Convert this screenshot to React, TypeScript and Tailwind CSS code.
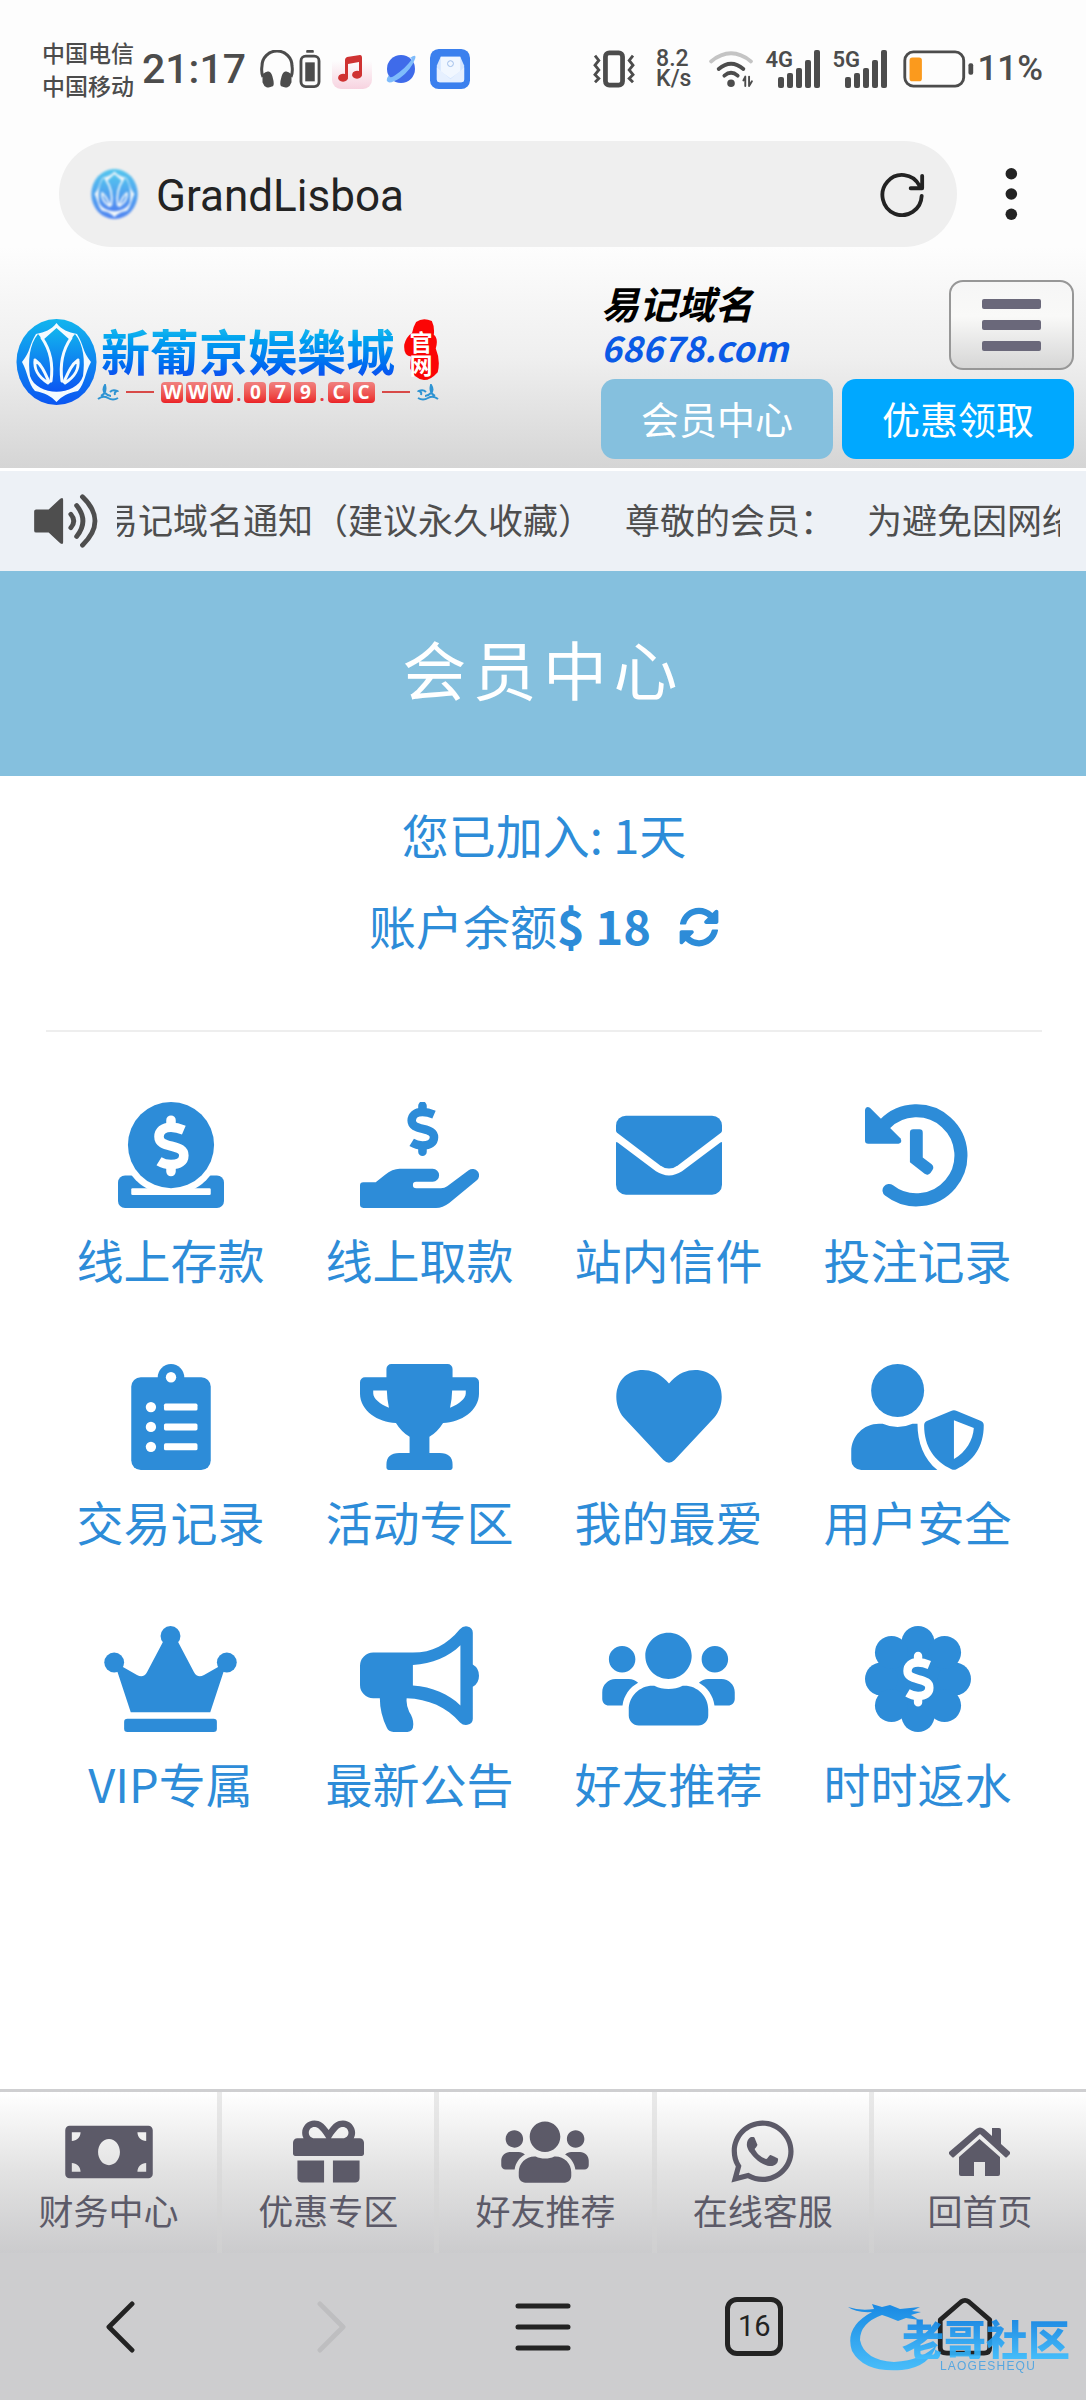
import type { ReactNode } from 'react';
import { FaGift, FaMoneyBill, FaSyncAlt, FaUsers, FaWhatsapp } from 'react-icons/fa';

type Item = {
    label: string;
    icon: ReactNode;
};

const dollar =
    'M318 136Q285 122 256 122C218 122 198 142 198 168C198 196 222 204 258 213C298 223 318 232 318 258C318 286 296 302 256 302Q224 302 198 286';

function Dollar({ color, transform }: { color: string; transform?: string }) {
    return (
        <g transform={transform} stroke={color} fill="none" strokeWidth="46">
            <path d={dollar} strokeLinejoin="round" />
            <path d="M256 88v22M256 312v24" strokeLinecap="round" />
        </g>
    );
}

function Coin() {
    return (
        <svg viewBox="0 0 512 512" className="h-[106px] w-[106px]" fill="currentColor">
            <rect y="355" width="512" height="157" rx="34" />
            <circle cx="256" cy="208" r="240" fill="#fff" />
            <path d="M64 440h384v40H64z" />
            <rect x="64" y="417" width="384" height="32" rx="6" fill="#fff" />
            <circle cx="256" cy="208" r="208" />
            <Dollar color="#fff" />
        </svg>
    );
}

function HandDollar() {
    return (
        <svg viewBox="0 0 576 512" className="h-[106px] w-[119px]" fill="currentColor">
            <Dollar color="currentColor" transform="translate(72 -62) scale(.9)" />
            <path d="M16 388H76L120 353Q157 323 192 323H352a31 31 0 0 1 0 62H272a16 16 0 0 0 0 32H392Q409 417 422 407L526 330a31 31 0 0 1 38 50L432 488Q400 512 368 512H16a16 16 0 0 1-16-16V404a16 16 0 0 1 16-16z" />
        </svg>
    );
}

function Mail() {
    return (
        <svg viewBox="0 0 512 512" className="h-[106px] w-[106px]" fill="currentColor">
            <path d="M48 66h416a48 48 0 0 1 48 48V138Q512 144 507 148L300 305Q256 338 212 305L5 148Q0 144 0 138V114a48 48 0 0 1 48-48z" />
            <path d="M0 196Q0 190 8 196L193 335Q256 375 319 335L504 196Q512 190 512 196V400a48 48 0 0 1-48 48H48a48 48 0 0 1-48-48z" />
        </svg>
    );
}

function History() {
    return (
        <svg viewBox="0 0 512 512" className="h-[106px] w-[106px]" fill="currentColor">
            <path d="M94 108A215 215 0 1 1 116 427" fill="none" stroke="currentColor" strokeWidth="63" strokeLinecap="round" />
            <path d="M0 38Q4 18 24 28L172 176Q182 196 162 202H16Q0 202 0 186z" />
            <path d="M233 132h30a16 16 0 0 1 16 16v120l43 33a20 20 0 0 1 4 28l-10 14a20 20 0 0 1-28 4l-71-56V148a16 16 0 0 1 16-16z" />
        </svg>
    );
}

function Clipboard() {
    return (
        <svg viewBox="0 0 384 512" className="h-[106px] w-[80px]" fill="currentColor">
            <circle cx="192" cy="64" r="64" />
            <rect y="64" width="384" height="448" rx="46" />
            <g fill="#fff">
                <circle cx="192" cy="64" r="25" />
                <circle cx="95" cy="208" r="25" />
                <circle cx="95" cy="304" r="25" />
                <circle cx="95" cy="400" r="25" />
                <rect x="158" y="191" width="162" height="34" rx="8" />
                <rect x="158" y="287" width="162" height="34" rx="8" />
                <rect x="158" y="383" width="162" height="34" rx="8" />
            </g>
        </svg>
    );
}

function Trophy() {
    return (
        <svg viewBox="0 0 576 512" className="h-[106px] w-[119px]" fill="currentColor">
            <path
                fillRule="evenodd"
                d="M152 0h272a24 24 0 0 1 24 24v40h104a24 24 0 0 1 24 24v56C576 224 490 284 402 285Q376 328 336 352V430h50q62 0 62 56v16q0 10-10 10H138q-10 0-10-10v-16q0-56 62-56h50V352Q200 328 174 285C86 284 0 224 0 144V88a24 24 0 0 1 24-24h104V24a24 24 0 0 1 24-24zM64 128h66q1 45 10 83C96 195 64 165 64 141zM512 128h-66q-1 45-10 83C480 195 512 165 512 141z"
            />
        </svg>
    );
}

function Heart() {
    return (
        <svg viewBox="0 0 512 512" className="h-[106px] w-[106px]" fill="currentColor">
            <path d="M256 94L244 81C180 12 88 18 40 62C-8 106-14 196 38 260L229 464Q256 490 283 464L474 260C526 196 520 106 472 62C424 18 332 12 268 81z" />
        </svg>
    );
}

function UserShield() {
    return (
        <svg viewBox="0 0 640 512" className="h-[106px] w-[133px]" fill="currentColor">
            <circle cx="224" cy="128" r="128" />
            <path d="M134 288h18q72 32 144 0h24c0 90 30 170 96 224H48a48 48 0 0 1-48-48V422C0 348 60 288 134 288z" />
            <path
                fillRule="evenodd"
                d="M482 227Q496 220 510 227L624 274Q640 280 640 296C640 400 590 470 508 508Q496 514 484 508C402 470 352 400 352 296Q352 280 368 274zM496 272V459C555 425 588 368 592 309z"
            />
        </svg>
    );
}

function Crown() {
    return (
        <svg viewBox="0 0 640 512" className="h-[106px] w-[133px]" fill="currentColor">
            <circle cx="48" cy="176" r="48" />
            <circle cx="320" cy="48" r="48" />
            <circle cx="592" cy="176" r="48" />
            <path d="M86 196L158 237Q190 254 207 222L284 76H356L433 222Q450 254 482 237L554 196L578 216L512 416H128L62 216z" />
            <rect x="96" y="448" width="448" height="64" rx="16" />
        </svg>
    );
}

function Bullhorn() {
    return (
        <svg viewBox="0 0 576 512" className="h-[106px] w-[119px]" fill="currentColor">
            <path
                fillRule="evenodd"
                d="M64 128H256C350 128 420 90 482 16Q500-2 520 2Q546 8 546 32V186q30 18 30 54t-30 54V448Q546 472 520 478Q500 482 484 466C420 392 330 352 226 349q-4 30 12 66q20 30 20 60q0 36-28 37h-68q-24 0-32-20q-34-70-34-143H64a64 64 0 0 1-64-64V192a64 64 0 0 1 64-64zM256 188V288C350 294 430 330 486 384V93C430 150 350 182 256 188z"
            />
        </svg>
    );
}

function BadgeDollar() {
    return (
        <svg viewBox="0 0 512 512" className="h-[106px] w-[106px]" fill="currentColor">
            <circle cx="256" cy="256" r="190" />
            <circle cx="256" cy="80" r="80" />
            <circle cx="256" cy="432" r="80" />
            <circle cx="80" cy="256" r="80" />
            <circle cx="432" cy="256" r="80" />
            <circle cx="128" cy="128" r="80" />
            <circle cx="384" cy="128" r="80" />
            <circle cx="128" cy="384" r="80" />
            <circle cx="384" cy="384" r="80" />
            <Dollar color="#fff" transform="translate(31 66) scale(.88 .9)" />
        </svg>
    );
}

function House() {
    return (
        <svg viewBox="0 0 61 50" className="h-[50px] w-[61px]" fill="currentColor">
            <path d="M43 1h7q2 0 2 2v14l9 8q1 1 0 2l-3 3q-1 1-2 0L31 7 5 30q-1 1-2 0l-3-3q-1-1 0-2L27 2q4-3 8 0l8 7z" />
            <path d="M30.500 12L51 30v17q0 2-2 2H36V35H25v14H12q-2 0-2-2V30z" />
        </svg>
    );
}

function Lotus({ className, id }: { className: string; id: string }) {
    return (
        <svg viewBox="0 0 81 86" className={className}>
            <defs>
                <linearGradient id={id} x1="0" y1="0" x2="0" y2="1">
                    <stop offset="0" stopColor="#12b5ee" />
                    <stop offset="1" stopColor="#0b56f2" />
                </linearGradient>
            </defs>
            <ellipse cx="40.500" cy="43" rx="40" ry="43" fill={`url(#${id})`} />
            <path d="M40.500 4C46 11 52 13 61 15C68 26 66 32 75 43C69 54 69 64 62 72C52 74 46 77 40.500 83C35 77 29 74 19 72C12 64 12 54 6 43C15 32 13 26 20 15C29 13 35 11 40.500 4z" fill="#f4fbff" />
            <path d="M40.500 9L54 21L59 15C68 26 69 42 67 57C60 78 21 78 14 57C12 42 13 26 22 15L27 21z" fill={`url(#${id})`} />
            <g fill="none" stroke="#f4fbff" strokeWidth="3" strokeLinecap="round">
                <path d="M26 19C35 32 37 48 35 62M55 19C46 32 44 48 46 62" />
                <path d="M19 41C18 50 21 57 32 64M19 41C26 46 29 54 33 63M62 41C63 50 60 57 49 64M62 41C55 46 52 54 48 63" />
            </g>
        </svg>
    );
}

function Wave({ className }: { className: string }) {
    return (
        <svg viewBox="0 0 22 17" className={className} fill="none" stroke="#2f94d3" strokeWidth="2">
            <path d="M1 15Q6 11 11 14T21 14M4 12Q10 9 8 1Q5 6 8 9T14 12M13 8Q16 5 20 7Q17 8 18 11" />
        </svg>
    );
}

const tiles = ['W', 'W', 'W', '.', '0', '7', '9', '.', 'C', 'C'];

function Logo() {
    return (
        <a href="#" className="flex items-center gap-1 pt-2 font-bold">
            <Lotus id="logo" className="h-[86px] w-[81px] shrink-0" />
            <span className="flex flex-col">
                <span className="flex gap-2">
                    <span className="bg-linear-to-b from-[#13b2ee] from-20% to-[#0c55f0] to-90% bg-clip-text text-[49px] leading-[61px] text-transparent">
                        新葡京娱樂城
                    </span>
                    <span className="relative flex h-[61px] w-[36px] flex-col items-center justify-end pb-1 text-[23px] leading-[23px] text-white">
                        <svg viewBox="0 0 36 62" className="absolute inset-0 h-full w-full" fill="#fb0505">
                            <path d="M13 3Q20-2 29 2Q32 8 31 16Q36 20 33 30Q38 42 35 54Q28 62 21 62Q10 60 7 50Q7 44 8 38Q0 38 1 26Q3 18 9 14Q10 8 13 3z" />
                        </svg>
                        <span className="relative">官</span>
                        <span className="relative">网</span>
                    </span>
                </span>
                <span className="-ml-1 flex h-6 items-center justify-between">
                    <Wave className="h-[17px] w-[22px]" />
                    <span className="h-[2px] w-[28px] bg-[#d84a48]" />
                    <span className="flex items-end gap-[3px] font-['Open_Sans',sans-serif]">
                        {tiles.map((t, i) =>
                            t === '.' ? (
                                <span key={i} className="text-[18px] leading-[18px] text-[#e53a3e]">.</span>
                            ) : (
                                <span
                                    key={i}
                                    className="flex h-[21px] w-[22px] items-center justify-center rounded-[4px] bg-linear-to-b from-[#f0807f] to-[#ea1f26] text-[19px] leading-[21px] text-white"
                                >
                                    {t}
                                </span>
                            )
                        )}
                    </span>
                    <span className="h-[2px] w-[28px] bg-[#d84a48]" />
                    <Wave className="h-[17px] w-[22px] -scale-x-100" />
                </span>
            </span>
        </a>
    );
}

function Signal({ name }: { name: string }) {
    return (
        <span className="relative h-[38px] w-[57px]">
            <span className="absolute -top-px left-0 font-['Roboto',sans-serif] text-[22px] leading-[22px] font-semibold">{name}</span>
            <svg viewBox="0 0 57 38" className="h-[38px] w-[57px]" fill="currentColor">
                <rect x="13" y="27" width="6" height="11" rx="2" />
                <rect x="22" y="23" width="6" height="15" rx="2" />
                <rect x="31" y="18" width="6" height="20" rx="2" />
                <rect x="40" y="10" width="6" height="28" rx="2" />
                <rect x="49" y="0" width="6" height="38" rx="2" />
            </svg>
        </span>
    );
}

function StatusBar() {
    return (
        <div className="flex h-[141px] items-center justify-between pr-[43px] pb-1 pl-[42px] text-[#4c4c4c]">
            <div className="flex items-center">
                <div className="text-[23px] leading-[33px] font-medium">
                    <p>中国电信</p>
                    <p>中国移动</p>
                </div>
                <span className="ml-2 font-['Roboto',sans-serif] text-[41px] leading-[50px] font-medium">21:17</span>
                <svg viewBox="0 0 34 38" className="ml-[14px] h-[38px] w-[34px]" fill="none" stroke="currentColor" strokeWidth="3">
                    <path d="M3 27Q1 22 2 16A15 15 0 0 1 32 16Q33 22 31 27" />
                    <path d="M4 25Q9 20 11 27T12 35Q6 38 4 32zM30 25Q25 20 23 27T22 35Q28 38 30 32z" fill="currentColor" />
                </svg>
                <svg viewBox="0 0 22 40" className="ml-[5px] h-[38px] w-[22px]" fill="currentColor">
                    <rect x="7" width="8" height="3" rx="1" />
                    <rect x="1.500" y="6.500" width="19" height="32" rx="5" fill="none" stroke="currentColor" strokeWidth="3" />
                    <rect x="6" y="13" width="10" height="20" />
                </svg>
                <svg viewBox="0 0 40 40" className="ml-[11px] h-10 w-10">
                    <defs>
                        <linearGradient id="music" x1="0" y1="0" x2="0" y2="1">
                            <stop offset="0.300" stopColor="#fdfdfd" />
                            <stop offset="1" stopColor="#f7d3e0" />
                        </linearGradient>
                    </defs>
                    <rect width="40" height="40" rx="9" fill="url(#music)" />
                    <path d="M13 11Q13 9 15 8L28 6Q30 6 30 9V25A5 4 0 1 1 27 22V13L16 15V28A5 4 0 1 1 13 25z" fill="#cf3232" />
                </svg>
                <svg viewBox="0 0 30 32" className="ml-[14px] h-8 w-[30px]">
                    <circle cx="15" cy="16" r="14" fill="#3f6bea" />
                    <path d="M24 5Q31 0 29 6Q25 17 14 25Q3 32 1 28Q0 26 3 22Q3 26 8 23Q20 15 26 6z" fill="#7fbcfb" />
                </svg>
                <svg viewBox="0 0 41 41" className="ml-[14px] h-10 w-10">
                    <rect width="41" height="41" rx="9" fill="#3b80ee" />
                    <path d="M7 17l4-9h20l4 9v14q0 3-3 3H10q-3 0-3-3z" fill="#d3e5ff" />
                    <path d="M11 8h20v15l-10 7-10-7z" fill="#f1f7ff" />
                    <path d="M7 19l14 12 14-12v12q0 3-3 3H10q-3 0-3-3z" fill="#e6f0ff" />
                    <circle cx="21" cy="15" r="3" fill="none" stroke="#9dbce8" />
                </svg>
            </div>
            <div className="flex items-center">
                <svg viewBox="0 0 44 40" className="h-[38px] w-[44px]" fill="none" stroke="currentColor" strokeWidth="3">
                    <rect x="13" y="3" width="18" height="34" rx="4" strokeWidth="5" />
                    <path d="M2 6l4 5-4 5 4 5-4 5 4 4-4 4M42 6l-4 5 4 5-4 5 4 5-4 4 4 4" />
                </svg>
                <div className="ml-5 font-['Roboto',sans-serif] text-[23px] leading-5 font-medium">
                    <p>8.2</p>
                    <p>K/s</p>
                </div>
                <svg viewBox="0 0 47 40" className="ml-[17px] h-[38px] w-[47px]" fill="none" stroke="currentColor" strokeWidth="4" strokeLinecap="round">
                    <path d="M2 12Q23-5 44 12" stroke="#c4c4c4" />
                    <path d="M10 20Q23 9 36 20M16 27Q23 21 30 27" />
                    <circle cx="23" cy="35" r="2" />
                    <path d="M38 28v10M36 32l2-4M42 28v10M42 38l3-5" strokeWidth="2" />
                </svg>
                <span className="ml-[10px] flex gap-[10px]">
                    <Signal name="4G" />
                    <Signal name="5G" />
                </span>
                <svg viewBox="0 0 76 40" className="ml-3 h-[38px] w-[76px]">
                    <rect x="2" y="2" width="62" height="36" rx="9" fill="none" stroke="currentColor" strokeWidth="3" />
                    <rect x="7" y="8" width="13" height="25" rx="3" fill="#fb9a1d" />
                    <rect x="69" y="14" width="5" height="12" rx="2" fill="currentColor" />
                </svg>
                <span className="font-['Roboto',sans-serif] text-[35px] leading-[50px] font-medium">11%</span>
            </div>
        </div>
    );
}

function AddressBar() {
    return (
        <div className="flex h-[106px] items-center pr-[46px] pl-[59px] text-[#232323]">
            <div className="flex h-full flex-1 items-center rounded-full bg-[#efefef] pr-[31px] pl-8">
                <Lotus id="favicon" className="h-[54px] w-[47px] opacity-70 blur-[1px]" />
                <input
                    aria-label="网址"
                    defaultValue="GrandLisboa"
                    className="ml-[18px] min-w-0 flex-1 bg-transparent pt-1 font-['Roboto',sans-serif] text-[44px] leading-[60px] outline-none"
                />
                <button aria-label="刷新">
                    <svg viewBox="0 0 46 48" className="h-[46px] w-[46px]" fill="none" stroke="currentColor" strokeWidth="4" strokeLinecap="round" strokeLinejoin="round">
                        <path d="M42.500 26A20.500 21 0 1 1 40 15M43 5V18H31" />
                    </svg>
                </button>
            </div>
            <button aria-label="更多" className="ml-[43px]">
                <svg viewBox="0 0 40 56" className="h-[54px] w-10" fill="currentColor">
                    <circle cx="11" cy="7" r="6" />
                    <circle cx="11" cy="28" r="6" />
                    <circle cx="11" cy="49" r="6" />
                </svg>
            </button>
        </div>
    );
}

function SiteHeader() {
    return (
        <header className="flex items-center justify-between border-b-3 border-white bg-linear-to-b from-[#fdfdfd] via-[#efefef] via-50% to-[#d5d5d5] bg-origin-padding pr-3 pl-4">
            <Logo />
            <div className="flex w-[473px] flex-col gap-[9px] pt-[33px] pb-[9px]">
                <div className="flex items-start justify-between">
                    <a href="#" className="font-bold italic">
                        <span className="block text-[38px] leading-[46px] text-black">易记域名</span>
                        <span className="block text-[35px] leading-[42px] text-[#0b5ae6]">68678.com</span>
                    </a>
                    <button
                        aria-label="菜单"
                        className="flex h-[90px] w-[125px] flex-col items-center justify-center gap-[11px] rounded-[14px] border-2 border-[#979797] bg-linear-to-b from-[#f6f6f6] via-[#f9f9f8] via-40% to-[#d6d6d6]"
                    >
                        <span className="h-[10px] w-[59px] rounded-[2px] bg-[#6a687a]" />
                        <span className="h-[10px] w-[59px] rounded-[2px] bg-[#6a687a]" />
                        <span className="h-[10px] w-[59px] rounded-[2px] bg-[#6a687a]" />
                    </button>
                </div>
                <div className="grid grid-cols-2 gap-[9px] text-[38px] text-white">
                    <button className="h-20 rounded-[14px] bg-[#85c0de] pb-1">会员中心</button>
                    <button className="h-20 rounded-[14px] bg-[#00a8ff] pb-1">优惠领取</button>
                </div>
            </div>
        </header>
    );
}

function Notice() {
    return (
        <div className="flex h-[100px] items-center bg-[#edf1f6] pr-[26px] pl-[33px] text-[#4e4e4e]">
            <svg viewBox="0 0 67 58" className="h-[56px] w-[67px] shrink-0" fill="currentColor">
                <path d="M2 17h13L27 6q3-2 3 1v44q0 3-3 1L15 41H2q-2 0-2-2V19q0-2 2-2z" />
                <path d="M38 22q6 7 0 14M44 13q13 16 0 32M50 4q26 25 0 50" fill="none" stroke="currentColor" strokeWidth="5" strokeLinecap="round" />
            </svg>
            <div className="ml-[17px] min-w-0 flex-1 overflow-hidden pb-1">
                <p className="-ml-[14px] flex gap-8 text-[35px] leading-[52px] whitespace-nowrap">
                    <span>易记域名通知（建议永久收藏）</span>
                    <span>尊敬的会员：</span>
                    <span>为避免因网络</span>
                </p>
            </div>
        </div>
    );
}

const menus: Item[] = [
    { label: '线上存款', icon: <Coin /> },
    { label: '线上取款', icon: <HandDollar /> },
    { label: '站内信件', icon: <Mail /> },
    { label: '投注记录', icon: <History /> },
    { label: '交易记录', icon: <Clipboard /> },
    { label: '活动专区', icon: <Trophy /> },
    { label: '我的最爱', icon: <Heart /> },
    { label: '用户安全', icon: <UserShield /> },
    { label: 'VIP专属', icon: <Crown /> },
    { label: '最新公告', icon: <Bullhorn /> },
    { label: '好友推荐', icon: <FaUsers className="h-[106px] w-[133px]" /> },
    { label: '时时返水', icon: <BadgeDollar /> },
];

const tabs: Item[] = [
    { label: '财务中心', icon: <FaMoneyBill className="h-[70px] w-[88px]" /> },
    { label: '优惠专区', icon: <FaGift className="h-[71px] w-[71px]" /> },
    { label: '好友推荐', icon: <FaUsers className="h-[70px] w-[88px]" /> },
    { label: '在线客服', icon: <FaWhatsapp className="h-[71px] w-[71px]" /> },
    { label: '回首页', icon: <House /> },
];

function Member() {
    return (
        <main className="flex-1 bg-white text-[#2d8cd8]">
            <h1 className="bg-[#85c0de] pb-3 text-center text-[64px] leading-[193px] tracking-widest text-white">会员中心</h1>
            <div className="mr-11 ml-[46px] flex flex-col items-center border-b-2 border-[#eee] pt-3 pb-[60px] text-[47px] leading-[91px]">
                <p>您已加入: 1天</p>
                <p className="flex items-center">
                    账户余额<b>$ 18</b>
                    <button aria-label="刷新余额" className="ml-7 pt-1">
                        <FaSyncAlt className="h-10 w-10" />
                    </button>
                </p>
            </div>
            <nav className="mr-11 ml-[46px] grid grid-cols-4 gap-y-[50px] pt-[70px]">
                {menus.map((m) => (
                    <a key={m.label} href="#" className="flex flex-col items-center gap-[18px] text-[47px] leading-[66px]">
                        <span className="flex h-[106px] items-center">{m.icon}</span>
                        <span className="h-[88px]">{m.label}</span>
                    </a>
                ))}
            </nav>
        </main>
    );
}

function TabBar() {
    return (
        <nav className="grid h-[164px] grid-cols-5 border-t-[3px] border-[#cfcfd1]">
            {tabs.map((t) => (
                <a
                    key={t.label}
                    href="#"
                    className="flex flex-col items-center border-l-[5px] border-[#d4d4d4]/50 bg-linear-to-b from-white via-[#e2e2e2] via-50% to-[#cbcbcd] pt-[24px] text-[35px] leading-[46px] text-[#5c5a68] first:border-l-0"
                >
                    <span className="flex h-[71px] items-center">{t.icon}</span>
                    {t.label}
                </a>
            ))}
        </nav>
    );
}

function Watermark() {
    return (
        <div className="pointer-events-none absolute right-4 bottom-[27px] h-[70px] w-[222px] opacity-90">
            <svg viewBox="0 0 222 70" className="absolute inset-0 h-full w-full">
                <defs>
                    <linearGradient id="dragon" x1="0" y1="0" x2="0" y2="1">
                        <stop offset="0" stopColor="#0783e6" />
                        <stop offset="1" stopColor="#3bbcff" />
                    </linearGradient>
                </defs>
                <path
                    d="M0 4Q12 8 26 6L24 1L34 4L42 2L52 6L72 4L64 8L73 9L63 12L71 17L58 15L50 18L40 14L34 12Q12 20 12 37Q16 57 46 59Q76 57 89 41Q82 64 54 67Q16 70 4 48Q-4 24 24 9Q8 10 0 4z"
                    fill="url(#dragon)"
                />
            </svg>
            <span className="absolute top-[14px] right-0 bg-linear-to-b from-[#0a80e4] to-[#38bcff] bg-clip-text text-[42px] leading-[42px] font-black whitespace-nowrap text-transparent">
                老哥社区
            </span>
            <span className="absolute top-[57px] left-[92px] font-['Liberation_Sans',sans-serif] text-[12px] leading-3 tracking-widest text-[#4ba3e2]">
                LAOGESHEQU
            </span>
        </div>
    );
}

function BrowserBar() {
    return (
        <div className="relative grid h-[147px] grid-cols-5 place-items-center bg-[#cdcdcf] px-[15px] text-[#232323]">
            <button aria-label="后退">
                <svg viewBox="0 0 30 54" className="h-[52px] w-[29px]" fill="none" stroke="currentColor" strokeWidth="5" strokeLinecap="round" strokeLinejoin="round">
                    <path d="M27 3L3 27l24 24" />
                </svg>
            </button>
            <button aria-label="前进" className="text-[#bebec0]">
                <svg viewBox="0 0 30 54" className="h-[52px] w-[29px]" fill="none" stroke="currentColor" strokeWidth="5" strokeLinecap="round" strokeLinejoin="round">
                    <path d="M3 3l24 24L3 51" />
                </svg>
            </button>
            <button aria-label="菜单">
                <svg viewBox="0 0 56 48" className="h-12 w-[56px]" fill="none" stroke="currentColor" strokeWidth="5" strokeLinecap="round">
                    <path d="M3 3h50M3 24h50M3 45h50" />
                </svg>
            </button>
            <button className="flex h-[59px] w-[58px] items-center justify-center rounded-[12px] border-5 border-current font-['Roboto',sans-serif] text-[29px]">
                16
            </button>
            <button aria-label="主页">
                <svg viewBox="0 0 58 62" className="h-[59px] w-[58px]" fill="none" stroke="currentColor" strokeWidth="5" strokeLinejoin="round">
                    <path d="M3 24L25 5Q29 2 33 5L55 24V53Q55 59 49 59H10Q3 59 3 53z" />
                </svg>
            </button>
            <Watermark />
        </div>
    );
}

export default function App() {
    return (
        <div className="flex min-h-screen flex-col bg-[#fdfdfd] font-['Noto_Sans_CJK_SC',sans-serif]">
            <StatusBar />
            <AddressBar />
            <SiteHeader />
            <Notice />
            <Member />
            <TabBar />
            <BrowserBar />
        </div>
    );
}
